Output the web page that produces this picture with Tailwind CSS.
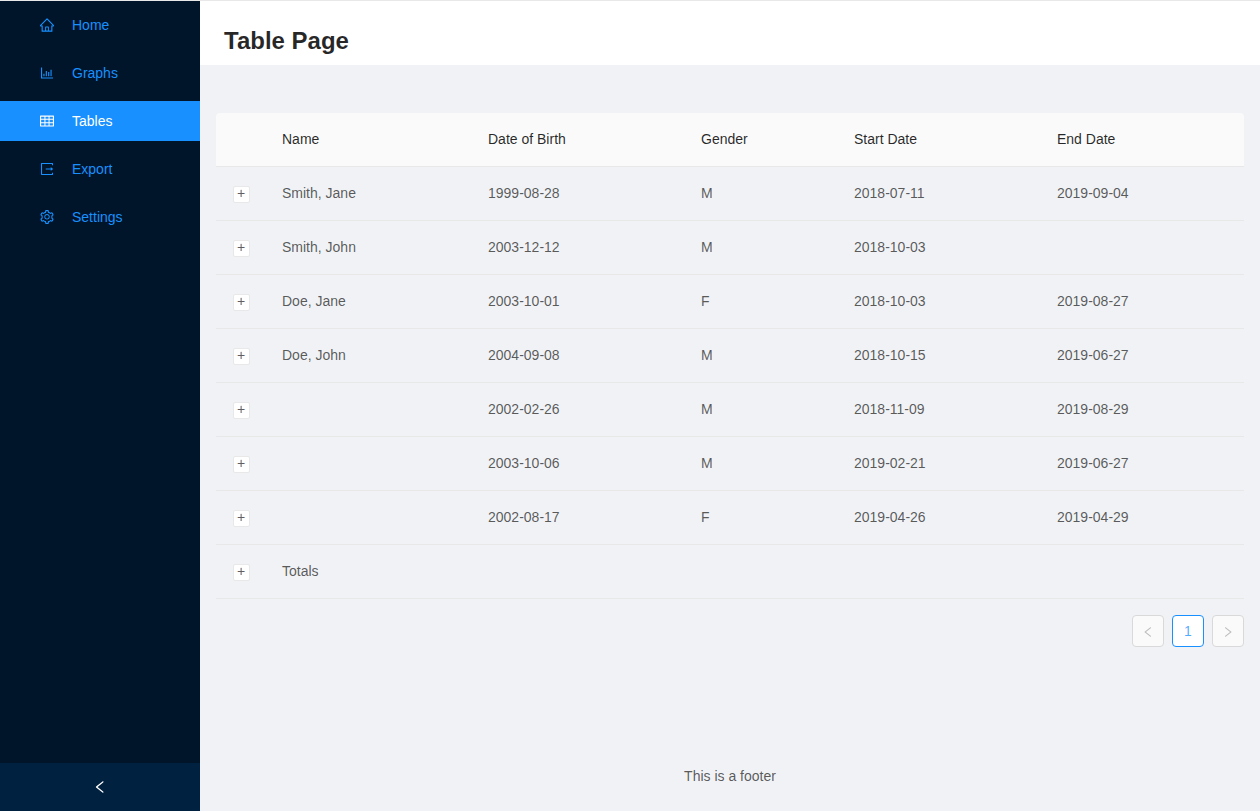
<!DOCTYPE html>
<html lang="en">
<head>
<meta charset="utf-8">
<title>Table Page</title>
<script src="https://cdn.jsdelivr.net/npm/@tailwindcss/browser@4"></script>
</head>
<body class="h-screen overflow-hidden bg-[#f0f2f5] font-['Liberation_Sans',Arial,sans-serif] text-sm leading-[21px] text-black/65">
<div class="flex h-full flex-col border-t border-[#e8e8e8]">
<div class="flex min-h-0 flex-1">
  <aside class="flex w-[200px] shrink-0 flex-col bg-[#001529]">
    <nav class="flex flex-1 flex-col gap-2 pt-1 text-[#1890ff]">
      <a class="flex h-10 items-center gap-[18px] pl-10"><svg class="size-3.5" viewBox="64 64 896 896" fill="currentColor"><path d="M946.5 505L560.1 118.8l-25.9-25.9a31.5 31.5 0 0 0-44.4 0L77.5 505a63.9 63.9 0 0 0-18.8 46c.4 35.2 29.7 63.3 64.9 63.3h42.5V940h691.8V614.3h43.4c17.1 0 33.2-6.7 45.3-18.8a63.6 63.6 0 0 0 18.7-45.3c0-17-6.7-33.1-18.8-45.2zM568 868H456V664h112v204zm217.9-325.7V868H632V640c0-22.1-17.9-40-40-40H432c-22.1 0-40 17.9-40 40v228H238.1V542.3h-96l370-369.7 23.1 23.1L882 542.3h-96.1z"/></svg><span>Home</span></a>
      <a class="flex h-10 items-center gap-[18px] pl-10"><svg class="size-3.5" viewBox="64 64 896 896" fill="currentColor"><path d="M888 792H200V168c0-4.400-3.600-8-8-8h-56c-4.400 0-8 3.600-8 8v688c0 4.400 3.600 8 8 8h752c4.400 0 8-3.600 8-8v-56c0-4.400-3.600-8-8-8zm-600-80h56c4.400 0 8-3.600 8-8V560c0-4.400-3.600-8-8-8h-56c-4.400 0-8 3.600-8 8v144c0 4.400 3.600 8 8 8zm152 0h56c4.400 0 8-3.600 8-8V384c0-4.400-3.600-8-8-8h-56c-4.400 0-8 3.600-8 8v320c0 4.400 3.600 8 8 8zm152 0h56c4.400 0 8-3.600 8-8V462c0-4.400-3.600-8-8-8h-56c-4.400 0-8 3.600-8 8v242c0 4.400 3.600 8 8 8zm152 0h56c4.400 0 8-3.600 8-8V304c0-4.400-3.600-8-8-8h-56c-4.400 0-8 3.600-8 8v400c0 4.400 3.600 8 8 8z"/></svg><span>Graphs</span></a>
      <a class="flex h-10 items-center gap-[18px] bg-[#1890ff] pl-10 text-white"><svg class="size-3.5" viewBox="64 64 896 896" fill="currentColor"><path d="M928 160H96c-17.7 0-32 14.3-32 32v640c0 17.7 14.3 32 32 32h832c17.7 0 32-14.3 32-32V192c0-17.700-14.300-32-32-32zm-40 208H676V232h212v136zm0 224H676V432h212v160zM412 432h200v160H412V432zm200-64H412V232h200v136zm-476 64h212v160H136V432zm0-200h212v136H136V232zm0 424h212v136H136V656zm276 0h200v136H412V656zm476 136H676V656h212v136z"/></svg><span>Tables</span></a>
      <a class="flex h-10 items-center gap-[18px] pl-10"><svg class="size-3.5" viewBox="64 64 896 896" fill="currentColor"><path d="M888.3 757.4h-53.8c-4.2 0-7.7 3.5-7.7 7.700v61.800H197.100V197.100h629.800v61.800c0 4.200 3.500 7.700 7.700 7.700h53.800c4.200 0 7.700-3.400 7.700-7.700V158.700c0-17-13.700-30.700-30.700-30.700H158.700c-17 0-30.700 13.700-30.700 30.700v706.600c0 17 13.700 30.700 30.700 30.700h706.600c17 0 30.700-13.700 30.700-30.700V765.100c0-4.300-3.500-7.700-7.700-7.700zM906.900 505.700L765 393.700c-5.300-4.200-13-.4-13 6.300v76H438c-4.400 0-8 3.600-8 8v56c0 4.400 3.600 8 8 8h314v76c0 6.700 7.800 10.500 13 6.300l141.900-112a8 8 0 0 0 0-12.600z"/></svg><span>Export</span></a>
      <a class="flex h-10 items-center gap-[18px] pl-10"><svg class="size-3.5" viewBox="64 64 896 896" fill="currentColor"><path d="M924.8 625.7l-65.5-56c3.1-19 4.7-38.4 4.7-57.8s-1.6-38.8-4.7-57.8l65.5-56a32.03 32.03 0 0 0 9.3-35.2l-.9-2.6a443.74 443.74 0 0 0-79.7-137.9l-1.8-2.1a32.12 32.12 0 0 0-35.1-9.5l-81.3 28.9c-30-24.6-63.5-44-99.7-57.6l-15.7-85a32.05 32.05 0 0 0-25.8-25.7l-2.7-.5c-52.1-9.4-106.9-9.4-159 0l-2.7.5a32.05 32.05 0 0 0-25.8 25.7l-15.8 85.4a351.86 351.86 0 0 0-99 57.4l-81.9-29.1a32 32 0 0 0-35.1 9.5l-1.8 2.1a446.02 446.02 0 0 0-79.7 137.9l-.9 2.6c-4.5 12.5-.8 26.5 9.3 35.2l66.3 56.6c-3.1 18.8-4.6 38-4.6 57.1 0 19.2 1.5 38.4 4.6 57.1L99 625.5a32.03 32.03 0 0 0-9.3 35.2l.9 2.6c18.1 50.4 44.900 96.900 79.700 137.900l1.800 2.100a32.120 32.120 0 0 0 35.100 9.500l81.900-29.100c29.800 24.500 63.100 43.900 99 57.400l15.800 85.400a32.050 32.050 0 0 0 25.800 25.700l2.700.5a449.400 449.400 0 0 0 159 0l2.700-.5a32.050 32.050 0 0 0 25.800-25.700l15.700-85a350 350 0 0 0 99.700-57.600l81.300 28.900a32 32 0 0 0 35.100-9.500l1.800-2.100c34.800-41.100 61.600-87.500 79.700-137.900l.9-2.600c4.500-12.300.8-26.300-9.300-35zM788.300 465.900c2.500 15.100 3.800 30.600 3.800 46.100s-1.300 31-3.800 46.100l-6.600 40.100 74.700 63.900a370.030 370.030 0 0 1-42.600 73.600L721 702.800l-31.400 25.800c-23.900 19.600-50.500 35-79.300 45.800l-38.100 14.300-17.900 97a377.500 377.500 0 0 1-85 0l-17.900-97.200-37.800-14.500c-28.500-10.800-55-26.200-78.700-45.700l-31.400-25.900-93.400 33.200c-17-22.900-31.200-47.600-42.600-73.600l75.500-64.500-6.500-40c-2.400-14.900-3.700-30.300-3.700-45.500 0-15.300 1.200-30.600 3.700-45.500l6.500-40-75.500-64.500c11.300-26.100 25.600-50.700 42.600-73.600l93.400 33.200 31.400-25.900c23.700-19.500 50.200-34.900 78.700-45.700l37.900-14.300 17.900-97.200c28.100-3.200 56.800-3.200 85 0l17.900 97 38.100 14.300c28.700 10.800 55.400 26.200 79.300 45.800l31.400 25.800 92.800-32.900c17 22.900 31.200 47.600 42.600 73.600L781.800 426l6.500 39.900zM512 326c-97.200 0-176 78.800-176 176s78.800 176 176 176 176-78.800 176-176-78.800-176-176-176zm79.200 255.200A111.600 111.600 0 0 1 512 614c-29.900 0-58-11.700-79.200-32.800A111.600 111.600 0 0 1 400 502c0-29.900 11.700-58 32.800-79.200C454 401.600 482.100 390 512 390c29.900 0 58 11.600 79.200 32.800A111.600 111.600 0 0 1 624 502c0 29.900-11.700 58-32.800 79.200z"/></svg><span>Settings</span></a>
    </nav>
    <button class="flex h-12 items-center justify-center bg-[#002140] text-white"><svg class="size-3.5" viewBox="64 64 896 896" fill="currentColor"><path d="M724 218.300V141c0-6.700-7.700-10.400-12.900-6.300L260.300 486.800a31.860 31.860 0 0 0 0 50.300l450.800 352.100c5.300 4.100 12.900.4 12.900-6.300v-77.300c0-4.900-2.300-9.600-6.100-12.600l-360-281 360-281.100c3.800-3 6.100-7.700 6.100-12.600z"/></svg></button>
  </aside>
  <div class="flex min-w-0 flex-1 flex-col">
    <header class="h-16 bg-white px-6 pt-[22px]"><h1 class="text-2xl leading-9 font-bold text-black/85">Table Page</h1></header>
    <main class="flex-1 px-4 pt-12">
      <table class="w-full table-fixed border-separate border-spacing-0 text-left">
        <colgroup><col class="w-[50px]"><col class="w-[206px]"><col class="w-[213px]"><col class="w-[153px]"><col class="w-[203px]"><col></colgroup>
        <thead class="text-black/85 [&_th]:h-[54px] [&_th]:border-b [&_th]:border-[#e8e8e8] [&_th]:bg-[#fafafa] [&_th]:px-4 [&_th]:font-normal">
          <tr><th class="rounded-tl"></th><th>Name</th><th>Date of Birth</th><th>Gender</th><th>Start Date</th><th class="rounded-tr">End Date</th></tr>
        </thead>
        <tbody id="rows" class="[&_td]:h-[54px] [&_td]:border-b [&_td]:border-[#e8e8e8] [&_td]:px-4"></tbody>
      </table>
      <div class="mt-4 flex justify-end gap-2">
        <button class="flex size-8 items-center justify-center rounded border border-[#d9d9d9] bg-[#fafafa] pt-0.5 text-black/25"><svg class="size-3" viewBox="64 64 896 896" fill="currentColor"><path d="M724 218.300V141c0-6.700-7.700-10.400-12.900-6.300L260.300 486.800a31.860 31.860 0 0 0 0 50.300l450.800 352.100c5.300 4.100 12.900.4 12.900-6.300v-77.300c0-4.900-2.300-9.600-6.100-12.600l-360-281 360-281.100c3.800-3 6.100-7.700 6.100-12.600z"/></svg></button>
        <button class="flex size-8 items-center justify-center rounded border border-[#1890ff] bg-white text-[#1890ff]/75">1</button>
        <button class="flex size-8 items-center justify-center rounded border border-[#d9d9d9] bg-[#fafafa] pt-0.5 text-black/25"><svg class="size-3" viewBox="64 64 896 896" fill="currentColor"><path d="M765.700 486.800L314.900 134.700A7.970 7.970 0 0 0 302 141v77.300c0 4.900 2.300 9.600 6.100 12.600l360 281.100-360 281.100c-3.900 3-6.100 7.700-6.100 12.600V883c0 6.700 7.700 10.400 12.900 6.300l450.800-352.100a31.960 31.960 0 0 0 0-50.400z"/></svg></button>
      </div>
    </main>
    <footer class="pb-6 text-center">This is a footer</footer>
  </div>
</div>
</div>
<script>
const rows = [
  ['Smith, Jane', '1999-08-28', 'M', '2018-07-11', '2019-09-04'],
  ['Smith, John', '2003-12-12', 'M', '2018-10-03', ''],
  ['Doe, Jane', '2003-10-01', 'F', '2018-10-03', '2019-08-27'],
  ['Doe, John', '2004-09-08', 'M', '2018-10-15', '2019-06-27'],
  ['', '2002-02-26', 'M', '2018-11-09', '2019-08-29'],
  ['', '2003-10-06', 'M', '2019-02-21', '2019-06-27'],
  ['', '2002-08-17', 'F', '2019-04-26', '2019-04-29'],
  ['Totals', '', '', '', ''],
];
document.getElementById('rows').innerHTML = rows.map(r =>
  '<tr><td><div class="mt-0.5 ml-px flex size-[17px] items-center justify-center rounded-xs border border-[#e8e8e8] bg-white leading-[14px]"><span class="-mt-1 mr-px">+</span></div></td>' +
  r.map(c => '<td>' + c + '</td>').join('') + '</tr>').join('');
</script>
</body>
</html>
